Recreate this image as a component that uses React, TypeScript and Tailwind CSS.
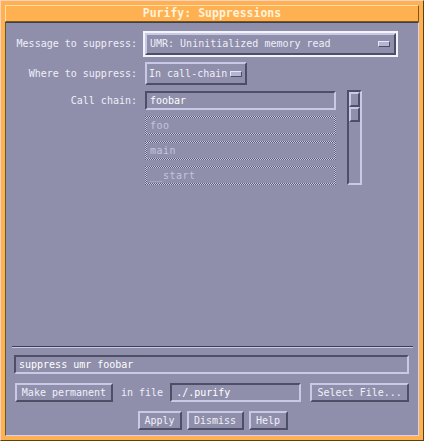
const raised = 'border-2 border-t-[#c9c9e6] border-l-[#c9c9e6] border-b-[#4e4e66] border-r-[#4e4e66]'
const sunken = 'border-2 border-t-[#4e4e66] border-l-[#4e4e66] border-b-[#c9c9e6] border-r-[#c9c9e6]'

function Indicator() {
  return (
    <span className="inline-block w-[12px] h-[6px] bg-[#b4b4d4] border border-t-[#e6e6fa] border-l-[#e6e6fa] border-b-[#4e4e66] border-r-[#4e4e66]" />
  )
}

function Button({ label, className }: { label: string; className?: string }) {
  return (
    <div className={`${raised} h-[19px] flex items-center justify-center bg-[#8f8fab] text-[#f0f0fa] ${className ?? ''}`}>
      {label}
    </div>
  )
}

function DisabledField({ text }: { text: string }) {
  return (
    <div className="h-[19px] p-[2px] bg-[repeating-conic-gradient(#c9c9e6_0_25%,#5a5a72_0_50%)] bg-[length:2px_2px]">
      <div className="h-full bg-[#8f8fab] flex items-center pl-[3px] text-[#c4c4dc] tracking-[0.5px]">{text}</div>
    </div>
  )
}

export default function App() {
  return (
    <div className="w-[435px] h-[442px] bg-white font-['DejaVu_Sans_Mono',monospace] text-[10px] leading-none">
      <div className="w-[424px] h-[441px] bg-[#ffb050] border border-t-[#ffd0c4] border-l-[#ffd0c4] border-b-[#5a4210] border-r-[#5a4210] p-[4px] flex flex-col">
        {/* title */}
        <div className="h-[17px] border border-t-[#ffdcaa] border-l-[#ffdcaa] border-b-[#7a5818] border-r-[#7a5818] flex items-center justify-center text-[#fff2dc] font-bold text-[11.5px]">
          Purify: Suppressions
        </div>

        {/* body */}
        <div className="flex-1 bg-[#8f8fab] border border-t-[#3e3e52] border-l-[#5a5a30] border-b-[#d4d4f0] border-r-[#d4d4f0] flex flex-col text-[#eeeefa]">
          <div className="pt-[8px] flex flex-col">
            <div className="flex items-center">
              <div className="w-[131px] text-right">Message to suppress:</div>
              <div className="ml-[6px] w-[255px] h-[26px] border-2 border-[#f4f4ff]">
                <div className={`${raised} h-full flex items-center justify-between pl-[3px] pr-[4px]`}>
                  <span>UMR: Uninitialized memory read</span>
                  <Indicator />
                </div>
              </div>
            </div>

            <div className="flex items-center mt-[5px]">
              <div className="w-[131px] text-right">Where to suppress:</div>
              <div className={`${raised} ml-[8px] w-[102px] h-[23px] flex items-center justify-between pl-[2px] pr-[3px]`}>
                <span>In call-chain</span>
                <Indicator />
              </div>
            </div>

            <div className="flex mt-[5px]">
              <div className="w-[131px] h-[20px] mt-[1px] flex items-center justify-end">Call chain:</div>
              <div className="ml-[8px] w-[191px] mt-[1px] flex flex-col gap-[6px]">
                <div className={`${sunken} h-[19px] flex items-center pl-[3px] text-white`}>foobar</div>
                <DisabledField text="foo" />
                <DisabledField text="main" />
                <DisabledField text="__start" />
              </div>
              <div className={`ml-[11px] w-[15px] h-[95px] border-2 border-t-[#4e4e66] border-l-[#4e4e66] border-b-[#c9c9e6] border-r-[#c9c9e6] bg-[#8f8fab] flex flex-col`}>
                <div className="h-[15px] border-2 border-t-[#c9c9e6] border-l-[#c9c9e6] border-b-[#4e4e66] border-r-[#4e4e66]" />
                <div className="h-[15px] border-2 border-t-[#c9c9e6] border-l-[#c9c9e6] border-b-[#4e4e66] border-r-[#4e4e66]" />
              </div>
            </div>
          </div>

          <div className="flex-1" />

          <div className="ml-[6px] mr-[5px] border-t border-t-[#3e3e52] border-b border-b-[#c9c9e6]" />

          <div className={`${sunken} mt-[7px] ml-[8px] mr-[9px] h-[19px] flex items-center pl-[3px] text-white`}>
            suppress umr foobar
          </div>

          <div className="mt-[9px] ml-[9px] flex items-center">
            <Button label="Make permanent" className="w-[98px]" />
            <span className="ml-[8px]">in file</span>
            <div className={`${sunken} ml-[7px] w-[131px] h-[19px] flex items-center pl-[4px] text-white`}>./.purify</div>
            <Button label="Select File..." className="ml-[9px] w-[99px]" />
          </div>

          <div className="mt-[9px] mb-[5px] flex justify-center gap-[5px] pl-[1px]">
            <Button label="Apply" className="w-[44px]" />
            <Button label="Dismiss" className="w-[57px]" />
            <Button label="Help" className="w-[39px]" />
          </div>
        </div>
      </div>
    </div>
  )
}
